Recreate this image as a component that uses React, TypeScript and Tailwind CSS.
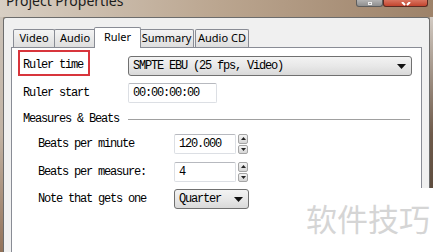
const mono = { fontFamily: '"Liberation Mono", monospace' };

function Arrow() {
  return (
    <svg width="9" height="5" viewBox="0 0 9 5" className="shrink-0">
      <path d="M0 0h9L4.5 5z" fill="#111" />
    </svg>
  );
}

function Spinner() {
  return (
    <div className="flex flex-col w-[10px] h-[20px] ml-[2px] gap-[1px]">
      {[0, 1].map((i) => (
        <div
          key={i}
          className="flex-1 flex items-center justify-center border border-[#a5a5a5] rounded-[2px] bg-gradient-to-b from-[#f4f4f4] to-[#d6d6d6]"
        >
          <svg width="5" height="3" viewBox="0 0 5 3">
            <path d={i === 0 ? 'M0 3h5L2.5 0z' : 'M0 0h5L2.5 3z'} fill="#222" />
          </svg>
        </div>
      ))}
    </div>
  );
}

function Field({ value, width }: { value: string; width: string }) {
  return (
    <div
      className={
        'h-[20px] flex items-center pl-[4px] bg-white border border-[#dcdfe4] border-t-[#b7b9bf] rounded-[2px] text-[12px] tracking-[-1.2px] text-black ' +
        width
      }
      style={mono}
    >
      {value}
    </div>
  );
}

function Combo({ value, width }: { value: string; width: string }) {
  return (
    <div
      className={
        'h-[20px] flex items-center justify-between pl-[4px] pr-[5px] border border-[#707070] rounded-[3px] bg-gradient-to-b from-[#f3f3f3] via-[#e8e8e8] to-[#d9d9d9] text-[12px] tracking-[-1.2px] text-black ' +
        width
      }
      style={mono}
    >
      <span className="whitespace-nowrap">{value}</span>
      <Arrow />
    </div>
  );
}

const tabs = [
  { label: 'Video', cls: 'w-[42px]' },
  { label: 'Audio', cls: 'w-[42px] -ml-px' },
  { label: 'Ruler', cls: 'w-[47px] -ml-[2px]', active: true },
  { label: 'Summary', cls: 'w-[55px] -ml-[2px]' },
  { label: 'Audio CD', cls: 'w-[54px] ml-px' },
];

export default function App() {
  return (
    <div
      className="relative w-[433px] h-[252px] overflow-hidden bg-[#b9a58f] flex flex-col"
      style={{ fontFamily: '"Noto Sans", sans-serif' }}
    >
      {/* Title bar */}
      <div className="h-[17px] shrink-0 flex bg-gradient-to-r from-[#d8cfc4] via-[#bba690] to-[#9d8269]">
        <div className="pl-[6px] -mt-[8px] text-[14px] text-[#1c1c1c] leading-[18px] whitespace-nowrap">
          Project Properties
        </div>
        <div className="ml-auto mr-[5px] flex items-start h-[8px]">
          <div className="w-[27px] h-[7px] flex justify-center items-end border border-t-0 border-[#5d5d5d] rounded-b-[3px] bg-gradient-to-b from-[#b4b4b4] to-[#8f8f8f]">
            <div className="w-[4px] h-[3px] border border-[#f0f0f0] mb-[1px]" />
          </div>
          <div className="w-[45px] h-[7px] flex justify-center items-end border border-t-0 border-[#5a2a22] rounded-b-[3px] bg-gradient-to-b from-[#d9735f] to-[#c2442e]">
            <svg width="12" height="4" viewBox="0 0 12 4">
              <path d="M2 0l3 3M10 0l-3 3" stroke="#fff" strokeWidth="2" />
            </svg>
          </div>
        </div>
      </div>

      {/* Body */}
      <div className="flex flex-1">
        <div className="w-[3px] bg-gradient-to-b from-[#cbc2b8] via-[#c2b3a4] to-[#927259]" />
        <div className="w-[427px] flex flex-col bg-[#f0f0f0] border border-b-0 border-[#6c6c6c] rounded-t-[3px] px-[7px]">
          {/* Tabs */}
          <div className="h-[29px] flex items-end pl-[2px] pt-[9px] text-[11px] text-black whitespace-nowrap">
            {tabs.map((t) =>
              t.active ? (
                <div
                  key={t.label}
                  className={
                    'relative z-10 h-[21px] -mb-px flex items-start justify-center pt-[1px] bg-white border border-b-0 border-[#898c95] rounded-t-[2px] ' +
                    t.cls
                  }
                >
                  {t.label}
                </div>
              ) : (
                <div
                  key={t.label}
                  className={
                    'h-[18px] flex items-center justify-center bg-gradient-to-b from-[#f4f4f4] to-[#dedede] border border-b-0 border-[#898c95] rounded-t-[2px] ' +
                    t.cls
                  }
                >
                  {t.label}
                </div>
              )
            )}
          </div>

          {/* Panel */}
          <div className="flex-1 bg-white border border-b-0 border-[#898c95] pl-[6px] text-[12px] tracking-[-1.2px] text-black whitespace-nowrap" style={mono}>
            <div className="mt-[2px] h-[26px] flex items-end">
              <div className="w-[110px]">
                <div className="w-[72px] h-[26px] border-2 border-[#d8353c] pl-[3px] pt-[6px] leading-[14px]">
                  Ruler time
                </div>
              </div>
              <Combo value="SMPTE EBU (25 fps, Video)" width="w-[284px]" />
            </div>

            <div className="mt-[7px] h-[20px] flex items-center">
              <div className="w-[110px] pl-[5px]">Ruler start</div>
              <Field value="00:00:00:00" width="w-[89px]" />
            </div>

            <div className="mt-[8px] h-[16px] flex items-center">
              <div className="w-[110px] pl-[5px]">Measures &amp; Beats</div>
              <div className="w-[282px] h-px bg-[#a0a0a0]" />
            </div>

            <div className="mt-[7px] h-[20px] flex items-center">
              <div className="w-[156px] pl-[20px]">Beats per minute</div>
              <Field value="120.000" width="w-[62px]" />
              <Spinner />
            </div>

            <div className="mt-[8px] h-[20px] flex items-center">
              <div className="w-[156px] pl-[20px]">Beats per measure:</div>
              <Field value="4" width="w-[62px]" />
              <Spinner />
            </div>

            <div className="mt-[7px] h-[20px] flex items-center">
              <div className="w-[156px] pl-[20px]">Note that gets one</div>
              <Combo value="Quarter" width="w-[75px]" />
            </div>
          </div>
        </div>
        <div className="w-[3px] bg-gradient-to-b from-[#d2cac2] via-[#6e5a4a] to-[#4c3d31]" />
      </div>

      {/* Watermark overlay */}
      <div className="absolute left-[420px] top-[188px] w-[13px] h-[64px] bg-white" />
      <div
        className="absolute left-[306px] top-[198px] text-[31px] leading-[40px] text-[#d5d5d5]"
        style={{ fontFamily: '"Noto Sans CJK SC", sans-serif' }}
      >
        软件技巧
      </div>
    </div>
  );
}
